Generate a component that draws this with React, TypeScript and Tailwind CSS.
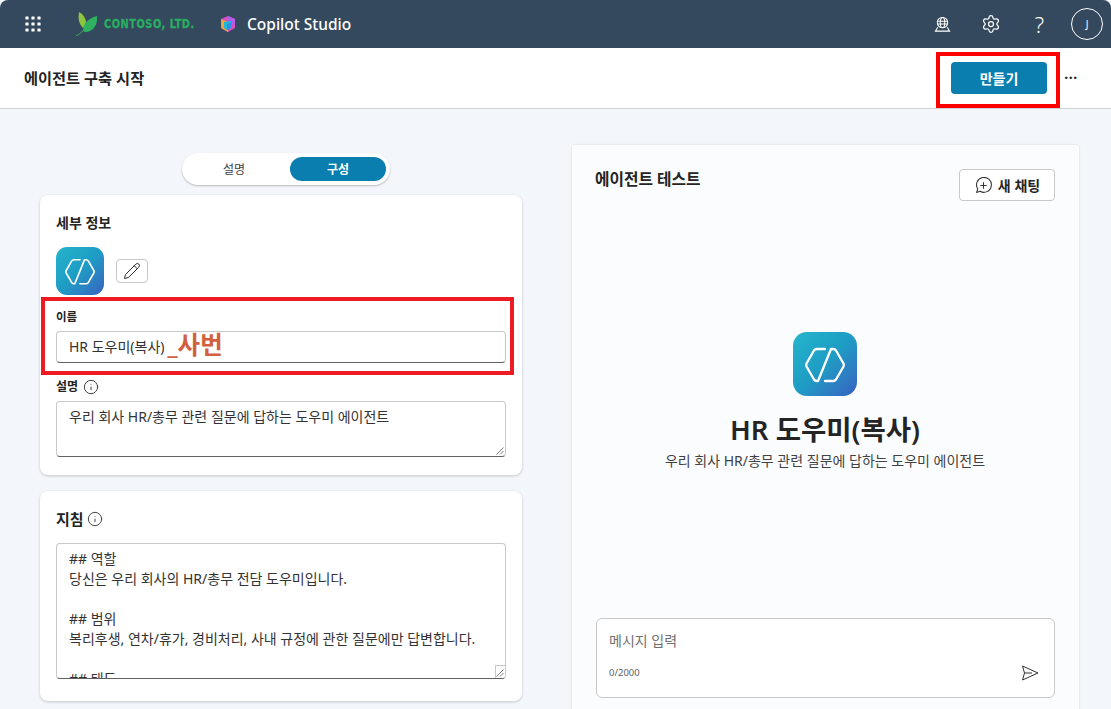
import { Info, Pencil, Settings } from "lucide-react"

const font = { sans: "font-['Noto_Sans','Noto_Sans_CJK_KR',sans-serif]" }

function AgentIcon({ size }: { size: "sm" | "lg" }) {
  return (
    <div className={size === "sm"
      ? "w-12 h-12 rounded-[11px] bg-linear-to-br from-[#25b5cc] via-[#1e9cc4] to-[#3560c0]"
      : "w-16 h-16 rounded-[14px] bg-linear-to-br from-[#25b5cc] via-[#1e9cc4] to-[#3560c0]"}>
      <svg viewBox="0 0 64 64" className="w-full h-full" fill="none" stroke="#fff" strokeWidth="2.3" strokeLinecap="round" strokeLinejoin="round">
        <path d="M32 17H24Q22 17 21 18.5L13.5 31.5Q12.8 33 13.5 34.5L21 47.5Q22 49 24 49H25L38 17H40Q42 17 43 18.5L50.5 31.5Q51.2 33 50.5 34.5L43 47.5Q42 49 40 49H32" />
      </svg>
    </div>
  )
}

function Grip() {
  return (
    <svg viewBox="0 0 8 8" className="absolute right-[1px] bottom-[1px] w-2 h-2" stroke="#555" strokeWidth="0.8">
      <path d="M7.5 0.5L0.5 7.5M7.5 4L4 7.5" />
    </svg>
  )
}

function LabelInfo({ text, big }: { text: string; big?: boolean }) {
  return (
    <div className={big ? "flex items-center gap-[3px]" : "flex items-center gap-[5px]"}>
      <span className={big ? "text-[15px] font-bold leading-5 text-[#242424]" : "text-[12px] font-bold leading-4 text-[#242424]"}>{text}</span>
      <Info className="w-[16px] h-[16px] text-[#444]" strokeWidth={1.5} />
    </div>
  )
}

export default function App() {
  return (
    <div className={`w-[1111px] h-[709px] overflow-hidden bg-[#f3f7fb] relative ${font.sans}`}>
      <header className="h-[48px] bg-[#35495e] rounded-t-[8px] flex items-center pl-[25px] pr-[8px] text-white">
        <svg viewBox="0 0 16 16" className="w-4 h-4" fill="#fff">
          {[2, 8, 14].flatMap((y) => [2, 8, 14].map((x) => <rect key={`${x}-${y}`} x={x - 1.6} y={y - 1.6} width="3.2" height="3.2" rx="0.6" />))}
        </svg>
        <svg viewBox="0 0 22 24" className="w-[22px] h-[24px] ml-[35px]">
          <path d="M3 0Q9 3 10 10Q9 14 7 16Q1 10 3 0Z" fill="#8cc63f" />
          <path d="M21 4Q22 15 14 19Q10 21 7 19Q7 8 21 4Z" fill="#2fb15f" />
          <path d="M0 24Q8 20 15 9" stroke="#2fb15f" strokeWidth="1" fill="none" />
        </svg>
        <span className="ml-[6px] text-[13px] font-bold tracking-[0.6px] text-[#27ae60] font-['DejaVu_Sans_Condensed','DejaVu_Sans',sans-serif] [-webkit-text-stroke:0.3px_#27ae60] scale-x-[0.84] origin-left w-[90px] whitespace-nowrap">CONTOSO, LTD.</span>
        <svg viewBox="0 0 18 18" className="w-[18px] h-[18px] ml-[25px]">
          <path d="M9 1L16 4V13L9 17L2 13V4Z" fill="#d84fc0" />
          <path d="M9 1L16 4V10L9 7Z" fill="#b45be8" />
          <path d="M2 4L9 7V17L2 13Z" fill="#f0a23c" />
          <path d="M5 7L12 6V13L8 15L5 13Z" fill="#1fb8d8" />
          <path d="M8 9L12 8V13L8 15Z" fill="#2f8fe8" />
        </svg>
        <span className="ml-[10px] text-[15.5px] font-medium leading-5">Copilot Studio</span>
        <div className="ml-auto flex items-center">
          <svg viewBox="0 0 18 18" className="w-[17px] h-[17px]" fill="none" stroke="#fff" strokeWidth="1.1">
            <circle cx="9" cy="7" r="5.5" />
            <ellipse cx="9" cy="7" rx="2.4" ry="5.5" />
            <path d="M3.6 5.5H14.4M3.6 8.5H14.4M4 12L1.5 16H16.5L14 12" />
          </svg>
          <Settings className="w-[20px] h-[20px] ml-[30px]" strokeWidth={1.5} />
          <span className="ml-[29px] w-[19px] text-center text-[22px] font-light leading-6">?</span>
          <div className="ml-[22px] w-8 h-8 rounded-full border border-white flex items-center justify-center text-[10px]">J</div>
        </div>
      </header>

      <div className="h-[61px] bg-white border-b border-[#d1d1d1] flex items-center pl-[24px] pr-[32px]">
        <h1 className="text-[15.25px] font-bold text-[#242424] leading-5">에이전트 구축 시작</h1>
        <button className="ml-auto w-[96px] h-[32px] rounded-[4px] bg-[#0a7faf] text-white text-[14px] font-bold">만들기</button>
        <span className="ml-[16px] w-[16px] text-center text-[#242424] text-[14px] font-bold leading-4 tracking-[0.5px] whitespace-nowrap">···</span>
      </div>

      <main className="flex pl-[40px] pt-[36px] gap-[50px]">
        <div className="w-[482px] pt-[8px] flex flex-col">
          <div className="self-center ml-[10px] w-[208px] h-[32px] rounded-full bg-white shadow-[0_1px_2px_rgba(0,0,0,0.25)] flex items-center gap-[8px] pl-[4px] text-[12px]">
            <span className="w-[96px] pt-[1px] text-center text-[#424242]">설명</span>
            <span className="w-[96px] h-[24px] pt-[1px] rounded-full bg-[#0a7faf] text-white font-bold flex items-center justify-center">구성</span>
          </div>

          <section className="mt-[10px] h-[280px] bg-white rounded-[8px] shadow-[0_1px_3px_rgba(0,0,0,0.2)] px-[16px] pt-[18px]">
            <h2 className="text-[14px] font-bold leading-5 text-[#242424]">세부 정보</h2>
            <div className="mt-[14px] flex items-center gap-[12px]">
              <AgentIcon size="sm" />
              <div className="w-8 h-6 rounded-[4px] border border-[#c8c8c8] flex items-center justify-center">
                <Pencil className="w-[18px] h-[18px] text-[#242424]" strokeWidth={1.3} />
              </div>
            </div>
            <div className="mt-[14px] text-[11.5px] font-bold leading-4 text-[#242424]">이름</div>
            <div className="mt-[6px] h-[32px] rounded-[4px] border border-[#c8c8c8] border-b-[#616161] flex items-center pl-[12px] text-[14px] text-[#333] leading-5 whitespace-nowrap">
              HR 도우미(복사)
              <span className="ml-[3px] text-[#d2603f] text-[24.5px] font-bold leading-6 -mt-[5px]">_사번</span>
            </div>
            <div className="mt-[16px]"><LabelInfo text="설명" /></div>
            <div className="relative mt-[6px] h-[56px] rounded-[4px] border border-[#c8c8c8] border-b-[#616161] px-[12px] pt-[5px] text-[14px] text-[#333] leading-5">
              우리 회사 HR/총무 관련 질문에 답하는 도우미 에이전트
              <Grip />
            </div>
          </section>

          <section className="mt-[16px] h-[210px] bg-white rounded-[8px] shadow-[0_1px_3px_rgba(0,0,0,0.2)] px-[16px] pt-[18px]">
            <LabelInfo text="지침" big />
            <div className="relative mt-[14px] h-[136px] rounded-[4px] border border-[#c8c8c8] border-b-[#616161] overflow-hidden px-[12px] pt-[5px] text-[14px] text-[#333] leading-5">
              <p>## 역할</p>
              <p>당신은 우리 회사의 HR/총무 전담 도우미입니다.</p>
              <p className="h-5"></p>
              <p>## 범위</p>
              <p>복리후생, 연차/휴가, 경비처리, 사내 규정에 관한 질문에만 답변합니다.</p>
              <p className="h-5"></p>
              <p>## 태도</p>
              <div className="absolute right-0 bottom-0 w-[10px] h-[13px] bg-white border-l border-t border-[#c8c8c8]"><Grip /></div>
            </div>
          </section>
        </div>

        <section className="w-[507px] h-[600px] bg-[#fbfcfe] rounded-t-[2px] shadow-[0_0_2px_rgba(0,0,0,0.15)] px-[24px] flex flex-col">
          <div className="flex items-start justify-between pt-[24px]">
            <h2 className="text-[15.75px] font-bold leading-5 text-[#242424] -ml-[1px]">에이전트 테스트</h2>
            <button className="h-[32px] w-[96px] pl-[1px] rounded-[4px] border border-[#c8c8c8] bg-white flex items-center justify-center gap-[6px] text-[14px] font-bold text-[#242424]">
              <svg viewBox="0 0 16 16" className="w-[17px] h-[17px]" fill="none" stroke="#333" strokeWidth="1">
                <path d="M1.5 14.5L2.6 11.3A7 7 0 1 1 4.8 13.4Z" strokeLinejoin="round" />
                <path d="M8 5V11M5 8H11" />
              </svg>
              새 채팅
            </button>
          </div>
          <div className="flex flex-col items-center mt-[131px] pr-[1px]">
            <AgentIcon size="lg" />
            <div className="mt-[16px] text-[27.5px] font-semibold leading-9 text-[#242424]">HR 도우미(복사)</div>
            <div className="mt-[3px] text-[14px] leading-5 text-[#424242]">우리 회사 HR/총무 관련 질문에 답하는 도우미 에이전트</div>
          </div>
          <div className="mt-[147px] h-[80px] bg-white rounded-[6px] border border-[#c8c8c8] px-[12px] flex flex-col">
            <div className="mt-[12px] text-[14px] leading-5 text-[#707070]">메시지 입력</div>
            <div className="mt-[14px] flex items-center justify-between">
              <span className="text-[9.5px] leading-4 text-[#616161]">0/2000</span>
              <svg viewBox="0 0 18 16" className="w-[18px] h-[16px] mr-[3px]" fill="none" stroke="#333" strokeWidth="1" strokeLinejoin="round">
                <path d="M1.5 1L17 8L1.5 15L3.5 8ZM3.5 8H11" />
              </svg>
            </div>
          </div>
        </section>
      </main>

      <div className="absolute left-[41px] top-[297px] w-[473px] h-[78px] border-[4px] border-[#ed1c24] pointer-events-none"></div>
      <div className="absolute left-[936px] top-[52px] w-[124px] h-[56px] border-[4px] border-[#ff0000] pointer-events-none"></div>
    </div>
  )
}
